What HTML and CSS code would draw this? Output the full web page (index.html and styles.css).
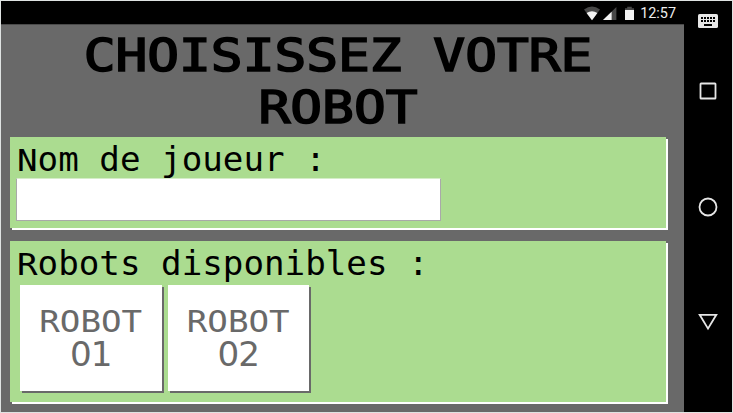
FILE: index.html
```html
<!DOCTYPE html>
<html lang="fr">
<head>
<meta charset="utf-8">
<title>Choisissez votre robot</title>
<link rel="stylesheet" href="styles.css">
</head>
<body>
<div class="device">
  <div class="screen">
    <header class="status">
      <svg class="signals" width="54" height="16" viewBox="0 0 54 16">
        <path d="M0 3.4Q8-2.2 16 3.4L8 14.2Z" fill="#484848"/>
        <path d="M2.6 7Q8 3.4 13.4 7L8 14.2Z" fill="#f2f2f2"/>
        <path d="M32.4 1V14H19Z" fill="#484848"/>
        <path d="M27.6 5.8V14H19Z" fill="#f2f2f2"/>
        <path d="M41 2.3H43.2V.8H47.8V2.3H50V5H41Z" fill="#484848"/>
        <path d="M41 4H50V14H41Z" fill="#f2f2f2"/>
      </svg>
      <span class="clock">12:57</span>
    </header>
    <main class="app">
      <h1 class="title"><span class="title-line">CHOISISSEZ VOTRE</span> <span class="title-line">ROBOT</span></h1>
      <section class="panel player">
        <label class="label" for="name"><span class="cap">N</span>om de joueur :</label>
        <input class="name" id="name" type="text">
      </section>
      <section class="panel robots">
        <div class="label"><span class="cap">R</span>obots disponibles :</div>
        <div class="choices">
          <button class="robot"><span class="word">ROBOT</span><span class="number">01</span></button>
          <button class="robot"><span class="word">ROBOT</span><span class="number">02</span></button>
        </div>
      </section>
    </main>
  </div>
  <nav class="nav">
    <svg class="keyboard" width="20" height="14" viewBox="0 0 20 14">
      <rect width="20" height="14" rx="1.6" fill="#e6e6e6"/>
      <path d="M3 4H17M3 7H17" stroke="#000" stroke-width="2" stroke-dasharray="2 1"/>
      <path d="M6 11H14" stroke="#000" stroke-width="2"/>
    </svg>
    <svg class="recent" width="18" height="18" viewBox="0 0 18 18"><rect x="1.5" y="1.5" width="15" height="15" rx=".6"/></svg>
    <svg class="home" width="20" height="20" viewBox="0 0 20 20"><circle cx="10" cy="10" r="8.5"/></svg>
    <svg class="back" width="20" height="18" viewBox="0 0 20 18"><path d="M1.7 1.8H18.3L10 15.6Z"/></svg>
  </nav>
</div>
</body>
</html>
```
FILE: styles.css
```css
* { box-sizing: border-box; }

body {
  margin: 0;
  background: #dfe3e2;
  font-family: "DejaVu Sans Mono", monospace;
}

.device {
  display: flex;
  width: 733px;
  height: 413px;
  padding: 1px;
}

.screen {
  display: flex;
  flex-direction: column;
  width: 683px;
}

.status {
  display: flex;
  justify-content: flex-end;
  height: 23px;
  padding: 5px 8px 0 0;
  background: #000;
}

.signals { margin-right: 2px; }

.clock {
  color: #ededed;
  font: 14.4px/16px Roboto, sans-serif;
}

.app {
  flex: 1;
  padding: 3px 18px 0 9px;
  background: #696969;
  border-top: 1px solid #4a4a4a;
}

.title {
  height: 110px;
  margin: 0;
  font-size: 52.8px;
  font-weight: 400;
  line-height: 52px;
  text-align: center;
  white-space: nowrap;
  -webkit-text-stroke: 2px #000;
}

.title-line {
  display: block;
  transform: scaleY(.84);
  transform-origin: 0 44px;
}

.title-line:first-child { margin-top: -1px; }

.panel {
  width: 656px;
  padding: 3px 6px;
  background: #abdc90;
  box-shadow: 2px 2px #fff;
}

.player { height: 91px; }

.robots {
  height: 161px;
  margin-top: 13px;
}

.label {
  display: block;
  height: 38px;
  padding-left: 1px;
  font-size: 34.2px;
  line-height: 38px;
  white-space: nowrap;
}

.cap {
  display: inline-block;
  transform: scaleY(.86);
  transform-origin: 0 31px;
}

.name {
  display: block;
  position: relative;
  width: 425px;
  height: 43px;
  border: 1px solid #a9a9a9;
  border-top-color: #d5edc8;
  background: #fff;
}

.choices {
  display: flex;
  gap: 6px;
  padding: 3px 4px;
}

.robot {
  display: flex;
  flex-direction: column;
  align-items: center;
  width: 141.5px;
  height: 106px;
  padding: 18px 0 0;
  border: 0;
  background: #fff;
  box-shadow: 2px 2px #696969;
  color: #696969;
  font: 34.2px/34px "DejaVu Sans Mono", monospace;
}

.word {
  transform: scaleY(.86);
  transform-origin: 0 29px;
}

.number {
  font-family: "DejaVu Sans", sans-serif;
  letter-spacing: -1px;
}

.nav {
  display: flex;
  flex-direction: column;
  align-items: center;
  width: 48px;
  padding-top: 13px;
  background: #000;
}

.recent, .home, .back {
  fill: none;
  stroke: #e6e6e6;
  stroke-width: 1.8;
}

.recent { margin-top: 54px; }
.home { margin-top: 97px; }
.back { margin-top: 96px; }
```
